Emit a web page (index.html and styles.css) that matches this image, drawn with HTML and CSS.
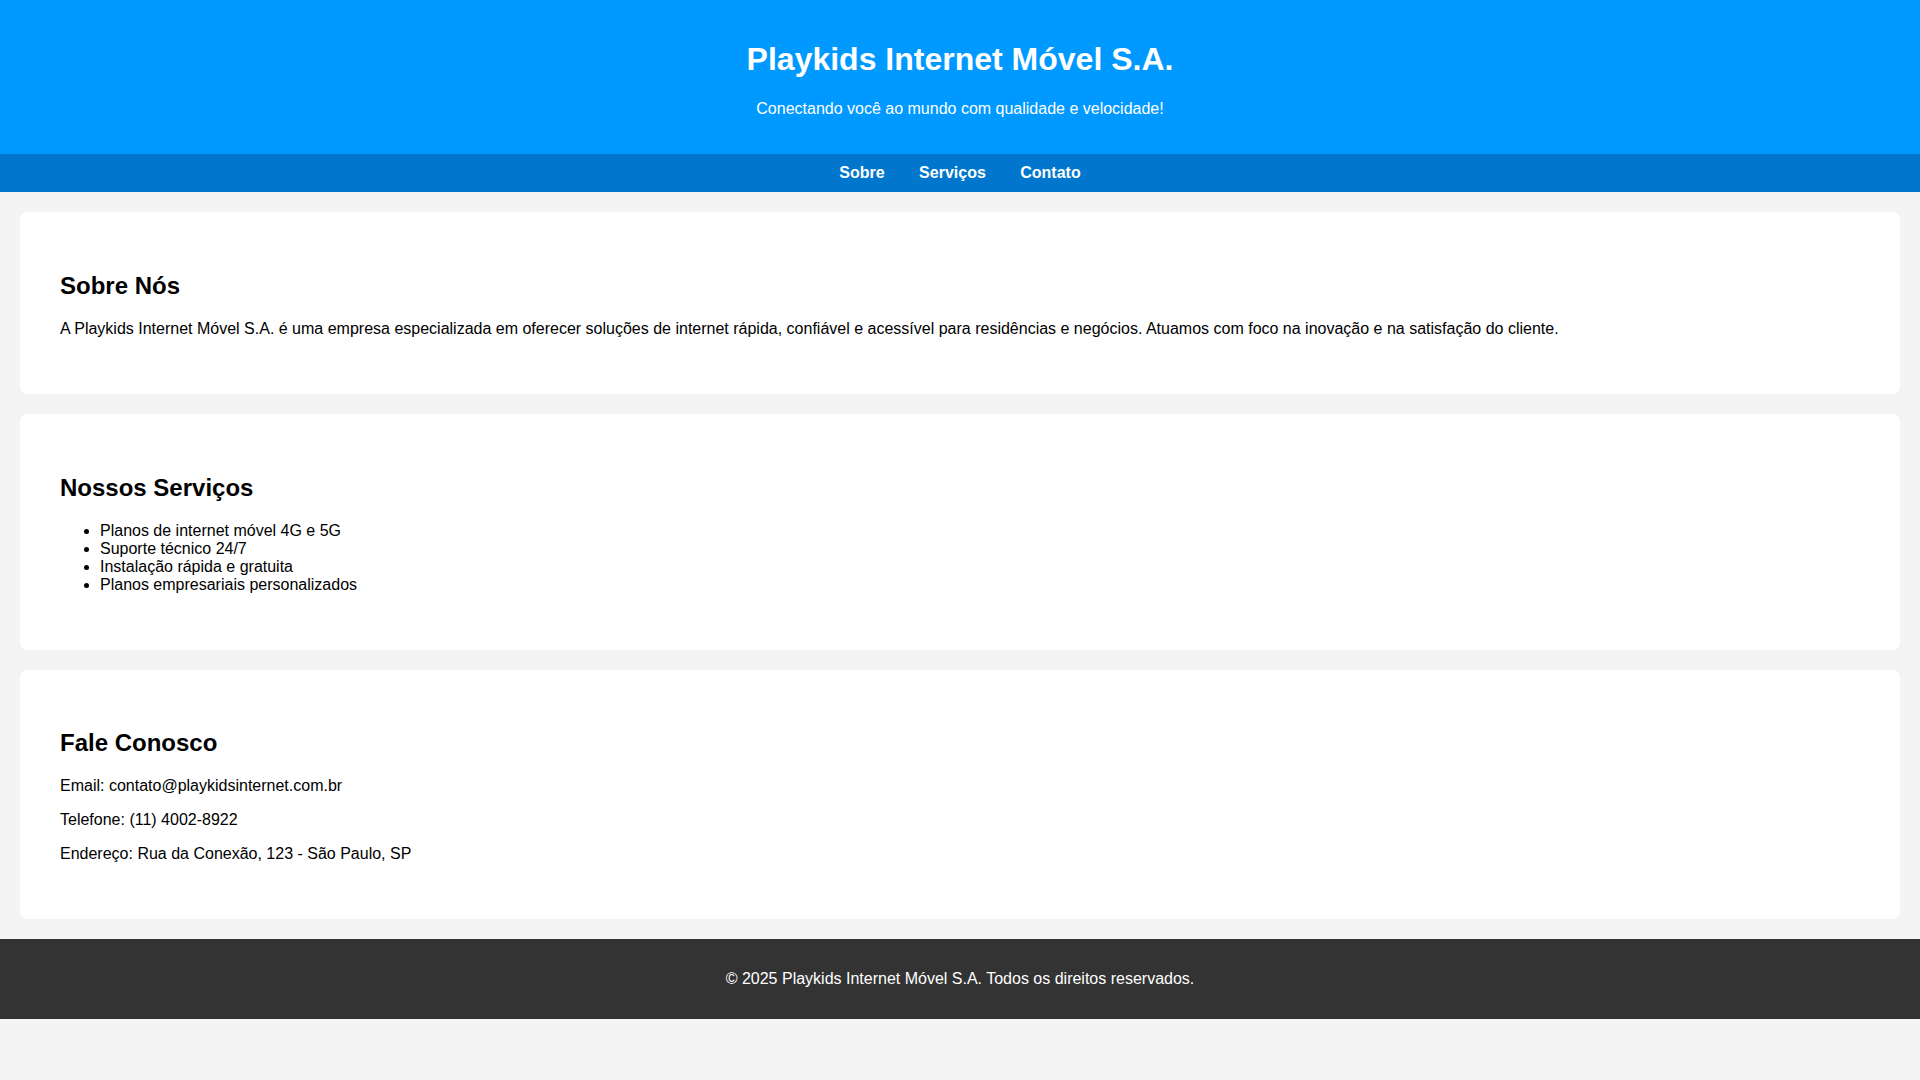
FILE: index.html
```html
<!DOCTYPE html>
<html lang="pt-BR">
<head>
<meta charset="UTF-8">
<title>Playkids Internet Móvel S.A.</title>
<link rel="stylesheet" href="styles.css">
</head>
<body>
<header class="site-header">
  <h1>Playkids Internet Móvel S.A.</h1>
  <p>Conectando você ao mundo com qualidade e velocidade!</p>
</header>
<nav class="site-nav">
  <a href="#sobre">Sobre</a>
  <a href="#servicos">Serviços</a>
  <a href="#contato">Contato</a>
</nav>
<main class="content">
  <section class="card" id="sobre">
    <h2>Sobre Nós</h2>
    <p>A Playkids Internet Móvel S.A. é uma empresa especializada em oferecer soluções de internet rápida, confiável e acessível para residências e negócios. Atuamos com foco na inovação e na satisfação do cliente.</p>
  </section>
  <section class="card" id="servicos">
    <h2>Nossos Serviços</h2>
    <ul>
      <li>Planos de internet móvel 4G e 5G</li>
      <li>Suporte técnico 24/7</li>
      <li>Instalação rápida e gratuita</li>
      <li>Planos empresariais personalizados</li>
    </ul>
  </section>
  <section class="card" id="contato">
    <h2>Fale Conosco</h2>
    <p>Email: contato@playkidsinternet.com.br</p>
    <p>Telefone: (11) 4002-8922</p>
    <p>Endereço: Rua da Conexão, 123 - São Paulo, SP</p>
  </section>
</main>
<footer class="site-footer">
  <p>© 2025 Playkids Internet Móvel S.A. Todos os direitos reservados.</p>
</footer>
</body>
</html>
```

FILE: styles.css
```css
body {
  margin: 0;
  font-family: "Liberation Sans", Arial, sans-serif;
  background: #f4f4f4;
  color: #000;
}

.site-header {
  background: #0099ff;
  color: #fff;
  text-align: center;
  padding: 20px;
}

.site-nav {
  background: #0077cc;
  text-align: center;
  padding: 10px;
}

.site-nav a {
  color: #fff;
  text-decoration: none;
  font-weight: bold;
  margin: 0 15px;
}

.content {
  padding: 20px;
}

.card {
  background: #fff;
  border-radius: 8px;
  padding: 40px;
  margin-bottom: 20px;
}

.card:last-child {
  margin-bottom: 0;
}

.site-footer {
  background: #333;
  color: #fff;
  text-align: center;
  padding: 15px;
}
```
